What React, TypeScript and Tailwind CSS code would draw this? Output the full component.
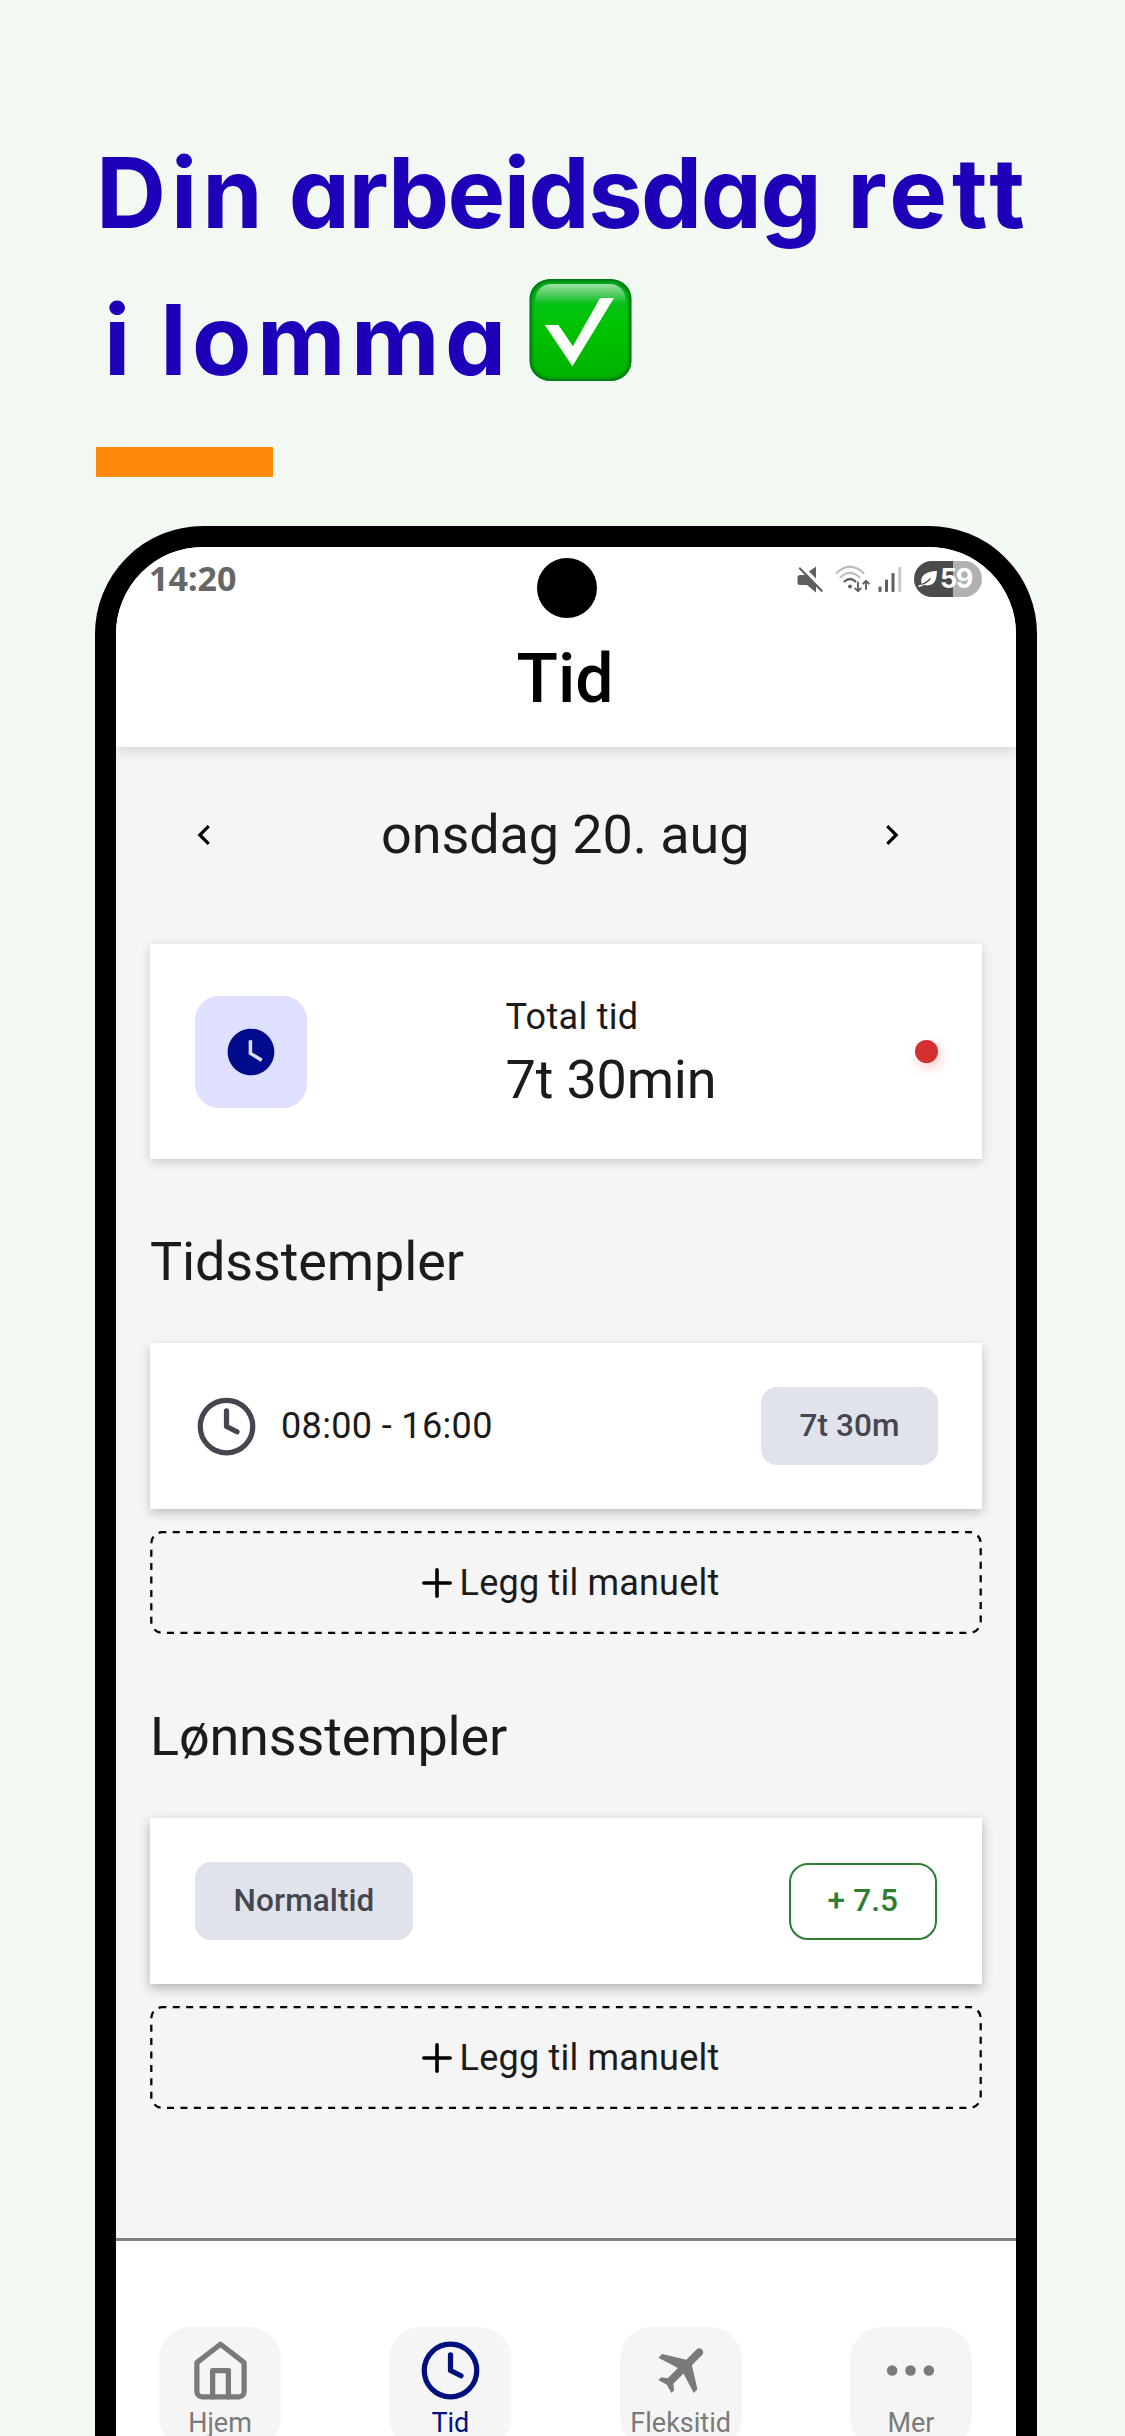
import type { ReactNode } from "react";
import clsx from "clsx";

const navItems = [
  { label: "Hjem", icon: <HomeIcon />, active: false },
  { label: "Tid", icon: <ClockIcon />, active: true },
  { label: "Fleksitid", icon: <PlaneIcon />, active: false },
  { label: "Mer", icon: <DotsIcon />, active: false },
];

function ClockIcon() {
  return (
    <svg width="63" height="63" viewBox="0 0 24 24" fill="none" stroke="currentColor" strokeWidth="2" strokeLinecap="round" strokeLinejoin="round">
      <circle cx="12" cy="12" r="10" />
      <path d="M12 6v6l4 2" />
    </svg>
  );
}

function HomeIcon() {
  return (
    <svg width="63" height="63" viewBox="0 0 24 24" fill="none" stroke="currentColor" strokeWidth="2" strokeLinecap="round" strokeLinejoin="round">
      <path d="m3 9 9-7 9 7v11a2 2 0 0 1-2 2H5a2 2 0 0 1-2-2z" />
      <path d="M9 22V12h6v10" />
    </svg>
  );
}

function PlaneIcon() {
  return (
    <svg width="63" height="63" viewBox="0 0 24 24" fill="currentColor">
      <path
        transform="translate(1.5 -0.6) rotate(45 12 12)"
        d="M21 16v-2l-8-5V3.5c0-.83-.67-1.5-1.5-1.5S10 2.67 10 3.5V9l-8 5v2l8-2.5V19l-2 1.5V22l3.5-1 3.5 1v-1.5L13 19v-5.5l8 2.5z"
      />
    </svg>
  );
}

function DotsIcon() {
  return (
    <svg width="63" height="63" viewBox="0 0 24 24" fill="currentColor">
      <circle cx="5" cy="12" r="2" />
      <circle cx="12" cy="12" r="2" />
      <circle cx="19" cy="12" r="2" />
    </svg>
  );
}

function CheckBadge() {
  return (
    <svg className="mb-5 ml-[17px]" width="103" height="102" viewBox="0 0 96 102" preserveAspectRatio="none" aria-hidden="true">
      <defs>
        <linearGradient id="badge" x1="0" y1="0" x2="0" y2="1">
          <stop offset="0" stopColor="#00a81c" />
          <stop offset="0.3" stopColor="#00c40e" />
          <stop offset="0.5" stopColor="#00c200" />
          <stop offset="1" stopColor="#00b000" />
        </linearGradient>
        <linearGradient id="gloss" x1="0" y1="0" x2="0" y2="1">
          <stop offset="0" stopColor="#fff" stopOpacity="0.62" />
          <stop offset="1" stopColor="#fff" stopOpacity="0" />
        </linearGradient>
        <filter id="soft" x="-10%" y="-10%" width="120%" height="120%">
          <feGaussianBlur stdDeviation="1.1" />
        </filter>
        <clipPath id="badgeClip">
          <rect x="0.5" y="0" width="95" height="102" rx="20" />
        </clipPath>
      </defs>
      <g clipPath="url(#badgeClip)">
        <rect x="0.5" width="95" height="102" fill="url(#badge)" />
        <rect x="0.5" y="0" width="95" height="102" rx="20" fill="none" stroke="#007a12" strokeWidth="5" filter="url(#soft)" />
        <path d="M6 26V21C6 11 13 5 21 5H75C83 5 90 11 90 21V26Z" fill="url(#gloss)" />
      </g>
      <path d="M14.7 46H27.5L40.9 67.2 66.2 19H79.2L40.5 87.2Z" fill="#fff" />
    </svg>
  );
}

function StatusIcons() {
  return (
    <div className="flex items-center text-[#5f5f5f]">
      <svg width="26" height="27" viewBox="0 0 26 27" fill="currentColor">
        <path d="M3 9H9.500L19 19V26.500L10 19H3Q.5 19 .5 16.500V11.500Q.5 9 3 9Z" />
        <path d="M12 5.600 19 .5V12.600Z" />
        <path d="M4.600 1 26 22.900" stroke="#fff" strokeWidth="1.600" />
        <path d="M3 2.400 24.600 24.800" stroke="currentColor" strokeWidth="2.200" strokeLinecap="round" />
      </svg>
      <svg className="ml-3" width="35" height="28" viewBox="0 0 35 28" fill="none" strokeLinecap="round">
        <path d="M1.5 8Q15 -4.5 28.5 8" stroke="#bdbdbd" strokeWidth="2.2" />
        <path d="M5.5 12.2Q15 3.5 24.5 12.2" stroke="#bdbdbd" strokeWidth="2.2" />
        <path d="M9.5 16.5Q15 11.5 20.5 16.5" stroke="currentColor" strokeWidth="2.2" />
        <circle cx="15" cy="21.5" r="1.9" fill="currentColor" />
        <path d="M23 17.5V26M20.2 23.4 23 26.2 25.8 23.4M31 24V16M28.2 18.6 31 15.8 33.8 18.6" stroke="currentColor" strokeWidth="1.9" />
      </svg>
      <svg className="ml-2" width="25" height="27" viewBox="0 0 25 27" fill="currentColor">
        <rect x="0.5" y="20.5" width="3" height="5.5" rx="1" />
        <rect x="7" y="13.5" width="3" height="12.5" rx="1" />
        <rect x="13.5" y="7" width="3" height="19" rx="1" />
        <rect x="20.3" y="1" width="3" height="25" rx="1" fill="#c9c9c9" />
      </svg>
      <div className="ml-[11px] flex h-9 w-[68px] items-center rounded-full bg-linear-to-r from-[#4b4b4b] from-58% to-[#b1b1b1] to-58% pl-1 text-white">
        <svg width="20" height="18" viewBox="0 0 20 18">
          <path d="M3.5 13.5C1.5 6 8 1 19 1 18.5 6 19 15 9 15.5 7.5 15.5 6.5 15 6 14.8Z" fill="#fff" />
          <path d="M.5 16.2C6 15 9 13 12.5 8.5" stroke="#fff" strokeWidth="1.6" fill="none" />
          <path d="M4 14.5C8 13 9.500 12 12.5 8.5" stroke="#4b4b4b" strokeWidth="1.2" fill="none" />
        </svg>
        <span className="ml-[2px] font-['Inter'] text-[27px] leading-9 font-bold tracking-[-1.5px]">59</span>
      </div>
    </div>
  );
}

function Card({ className, children }: { className?: string; children: ReactNode }) {
  return (
    <div className={clsx("flex shrink-0 items-center justify-between bg-white pr-11 pl-[45px]", className)}>
      {children}
    </div>
  );
}

function Chip({ children }: { children: ReactNode }) {
  return (
    <span className="flex h-[78px] items-center rounded-2xl bg-[#e1e3ec] px-[38.5px] text-[31.5px] font-medium tracking-[0.1px] text-[#44474f]">
      {children}
    </span>
  );
}

function SectionTitle({ children }: { children: ReactNode }) {
  return (
    <h2 className="mt-[22px] flex h-[162px] shrink-0 items-center text-[54px] leading-[72px] tracking-[-0.15px]">{children}</h2>
  );
}

function AddButton() {
  return (
    <button className="relative mt-[22px] flex h-[103px] shrink-0 items-center justify-center pl-2 text-4xl tracking-[0.2px]">
      {/* border-dashed can't set the dash length */}
      <svg className="absolute inset-0" width="832" height="103" fill="none" stroke="#000" strokeWidth="2.3">
        <rect x="1.3" y="1.2" width="829.400" height="100.600" rx="11" strokeDasharray="7 6.430" strokeDashoffset="3" />
      </svg>
      <svg width="32" height="32" viewBox="0 0 32 32" stroke="#000" strokeWidth="3.6" strokeLinecap="round">
        <path d="M16 2.800V29.200M2.800 16H29.200" />
      </svg>
      <span className="ml-[7px]">Legg til manuelt</span>
    </button>
  );
}

export default function App() {
  return (
    <div className="flex h-[2436px] w-[1125px] flex-col overflow-hidden bg-[#f2f9f3] font-['Roboto',sans-serif] text-[#1b1b1b]">
      <h1 className="mt-[119px] ml-[96px] shrink-0 font-['Inter',sans-serif] text-[97px] leading-[147px] font-bold text-[#1e00b8] [font-feature-settings:'cv11']">
        <span className="flex">
          <span className="tracking-[5px]">Din</span>
          <span className="ml-[21px] tracking-[-1.5px]">arbeidsdag</span>
          <span className="ml-[27px] tracking-[5px]">rett</span>
        </span>
        <span className="flex items-center">
          <span className="ml-2">i</span>
          <span className="ml-[30px] tracking-[5.5px]">lomma</span>
          <CheckBadge />
        </span>
      </h1>
      <div className="mt-[34px] ml-24 h-[30px] w-[177px] shrink-0 bg-[#ff890a]" />

      <div className="relative mt-[49px] ml-[95px] flex h-[2100px] w-[942px] shrink-0 flex-col overflow-hidden rounded-t-[108px] border-[21px] border-black bg-white">
        <div className="absolute top-[11px] left-[421px] z-20 size-[60px] rounded-full bg-black" />

        <header className="z-10 flex h-[200px] shrink-0 flex-col bg-white shadow-[0_2px_14px_rgba(0,0,0,0.16)]">
          <div className="flex h-16 items-center justify-between pr-[34px] pl-[33px]">
            <span className="pb-[2px] font-['Noto_Sans'] text-[34px] leading-none font-bold text-[#666]">14:20</span>
            <StatusIcons />
          </div>
          <div className="flex flex-1 items-center justify-center pr-[2px] text-[68px] leading-none font-medium text-black">
            Tid
          </div>
        </header>

        <main className="flex h-[1491px] shrink-0 flex-col bg-[#f5f5f5] px-[34px]">
          <div className="flex h-[175px] shrink-0 items-center pl-[47px]">
            <svg width="13" height="20" viewBox="0 0 13 20" fill="none" stroke="#000" strokeWidth="3.2">
              <path d="M11.700 1.200 2.800 10 11.700 18.800" />
            </svg>
            <span className="ml-[171px] text-[54px] tracking-[-0.1px]">onsdag 20. aug</span>
            <svg className="ml-[137px]" width="13" height="20" viewBox="0 0 13 20" fill="none" stroke="#000" strokeWidth="3.2">
              <path d="M1.300 1.200 10.200 10 1.300 18.800" />
            </svg>
          </div>

          <Card className="mt-[22px] h-[215px] shadow-[0_3px_10px_rgba(0,0,0,0.17)]">
            <div className="flex size-[112px] items-center justify-center rounded-[24px] bg-[#dfe0ff] text-[#000c8c]">
              <svg width="56" height="56" viewBox="0 0 24 24" fill="currentColor">
                <path d="M12 2C6.500 2 2 6.500 2 12s4.500 10 10 10 10-4.500 10-10S17.500 2 12 2zm4.200 14.200L11 13V7h1.500v5.200l4.500 2.700-.8 1.300z" />
              </svg>
            </div>
            <div className="pt-[2px]">
              <p className="text-4xl leading-[54px] tracking-[0.3px]">Total tid</p>
              <p className="text-[54px] leading-[72px] tracking-[-0.2px]">7t 30min</p>
            </div>
            <span className="size-[23px] rounded-full bg-[#d32f2f] shadow-[3px_5px_12px_rgba(255,60,40,0.25)]" />
          </Card>

          <SectionTitle>Tidsstempler</SectionTitle>
          <Card className="h-[166px] shadow-[0_4px_10px_rgba(0,0,0,0.22)]">
            <div className="flex items-center text-4xl tracking-[0.36px]">
              <span className="text-[#44474f]">
                <ClockIcon />
              </span>
              <span className="ml-[23px]">08:00 - 16:00</span>
            </div>
            <Chip>7t 30m</Chip>
          </Card>
          <AddButton />

          <SectionTitle>Lønnsstempler</SectionTitle>
          <Card className="h-[166px] shadow-[0_4px_11px_rgba(0,0,0,0.28)]">
            <Chip>Normaltid</Chip>
            <span className="mr-px flex h-[77px] items-center rounded-[19px] border-2 border-[#2e7d32] px-[37px] text-[31.5px] font-medium tracking-[0.1px] text-[#2e7d32]">
              + 7.5
            </span>
          </Card>
          <AddButton />
        </main>

        <nav className="flex flex-1 items-start justify-between border-t-[3px] border-[#808080] pt-[86px] pr-11 pl-[43px]">
          {navItems.map((item) => (
            <button
              key={item.label}
              className={clsx(
                "flex h-[122px] w-[122px] flex-col items-center rounded-[32px] bg-[#f5f5f5] pt-3 text-[27px] leading-[26px]",
                item.active ? "text-[#00107f]" : "text-[#7a7a7a]"
              )}
            >
              {item.icon}
              <span className="mt-2">{item.label}</span>
            </button>
          ))}
        </nav>
      </div>
    </div>
  );
}
